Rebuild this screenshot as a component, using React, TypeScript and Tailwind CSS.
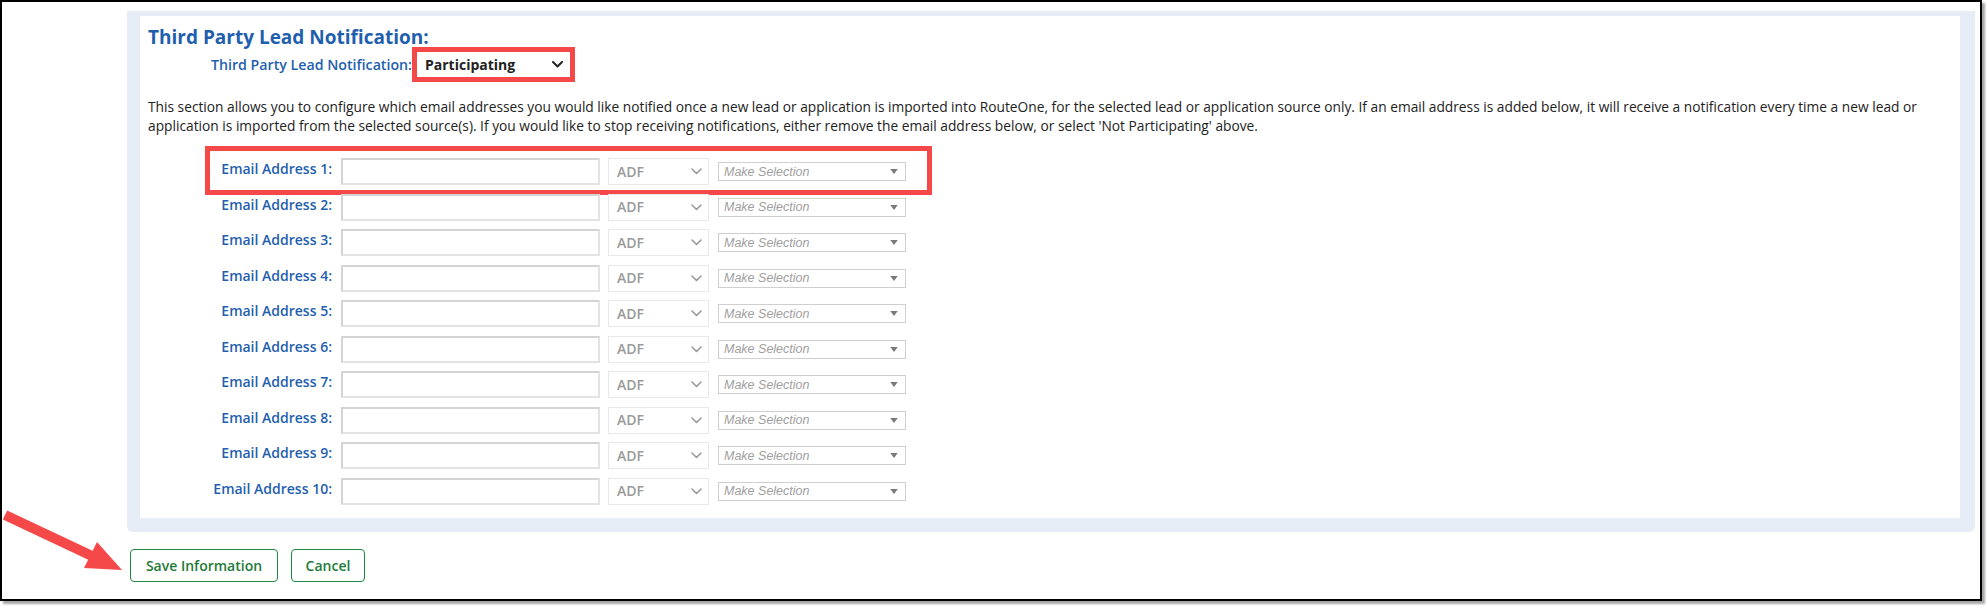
import React from "react";

const Chevron = ({ color, w = 11, h = 7, sw = 1.6 }: { color: string; w?: number; h?: number; sw?: number }) => (
  <svg width={w} height={h} viewBox="0 0 11 7" fill="none">
    <path d="M1 1 L5.5 5.5 L10 1" stroke={color} strokeWidth={sw} strokeLinecap="round" strokeLinejoin="round" />
  </svg>
);

const Triangle = () => (
  <svg width="8" height="5" viewBox="0 0 9 6">
    <path d="M0 0 H9 L4.5 6 Z" fill="#7a7a7a" />
  </svg>
);

function EmailRow({ n, highlight }: { n: number; highlight?: boolean }) {
  return (
    <div className="relative flex items-center h-[35.5px]">
      <div className="w-[127px] mb-[5px] text-right text-[14px] leading-[20px] font-semibold text-[#1f5fae] whitespace-nowrap">
        Email Address {n}:
      </div>
      <div className="ml-[9px] w-[259px] h-[27px] border-2 border-[#e3e3e3] border-t-[#d4d4d4] border-l-[#d4d4d4] bg-white" />
      <div className="ml-[8px] w-[101px] h-[27px] border border-[#e8e8e8] bg-white flex items-center justify-between pl-[8px] pr-[6px]">
        <span className="text-[14px] font-semibold text-[#9a9a9a] leading-none">ADF</span>
        <Chevron color="#9a9a9a" />
      </div>
      <div className="ml-[9px] w-[188px] h-[19px] border border-[#cfcfcf] bg-white flex items-center justify-between pl-[5px] pr-[7px]">
        <span className="font-['Liberation_Sans',Arial,sans-serif] italic text-[12.5px] text-[#a0a0a0] leading-none">Make Selection</span>
        <Triangle />
      </div>
      {highlight && (
        <div className="absolute left-0 -top-[8px] w-[727px] h-[49px] border-[5px] border-[#f54848] pointer-events-none" />
      )}
    </div>
  );
}

export default function App() {
  const rows = [1, 2, 3, 4, 5, 6, 7, 8, 9, 10];
  return (
    <div className="relative w-[1988px] h-[607px] bg-white font-['Open_Sans',sans-serif]">
      <div className="w-[1982px] h-[601px] border-2 border-black bg-white shadow-[3px_3px_2px_rgba(0,0,0,0.35)] pl-[125px] pt-[9px]">
        <div className="w-[1848px] bg-[#e7edf6] pt-[5px] pl-[13px] pr-[15px] pb-[14px] rounded-b-[6px]">
          <div className="bg-white px-[8px] pt-[11px] pb-[9px]">
            <h2 className="text-[19px] leading-[20px] font-bold text-[#1f5fae]">Third Party Lead Notification:</h2>
            <div className="flex items-center h-[35px]">
              <div className="w-[264px] text-right text-[14.2px] font-semibold text-[#1f5fae] whitespace-nowrap">
                Third Party Lead Notification:
              </div>
              <div className="w-[163px] h-[35px] border-[5px] border-[#f54848] bg-white flex items-center justify-between pl-[8px] pr-[7px]">
                <span className="text-[14px] font-bold text-[#222]">Participating</span>
                <Chevron color="#222" sw={2} />
              </div>
            </div>
            <p className="mt-[15px] text-[13.75px] leading-[19px] text-[#222]">
              This section allows you to configure which email addresses you would like notified once a new lead or application is imported into RouteOne, for the selected lead or application source only. If an email address is added below, it will receive a notification every time a new lead or application is imported from the selected source(s). If you would like to stop receiving notifications, either remove the email address below, or select 'Not Participating' above.
            </p>
            <div className="mt-[19px] ml-[57px]">
              {rows.map((n) => (
                <EmailRow key={n} n={n} highlight={n === 1} />
              ))}
            </div>
          </div>
        </div>
        <div className="mt-[17px] ml-[3px] flex gap-[13px]">
          <button className="w-[148px] h-[33px] rounded-[4px] border border-[#1f8a44] bg-white text-[14px] font-semibold text-[#1e7b37]">
            Save Information
          </button>
          <button className="w-[74px] h-[33px] rounded-[4px] border border-[#1f8a44] bg-white text-[14px] font-semibold text-[#1e7b37]">
            Cancel
          </button>
        </div>
      </div>
      <svg className="absolute left-0 top-[490px] pointer-events-none" width="140" height="95" viewBox="0 490 140 95">
        <line x1="5" y1="515" x2="92" y2="556" stroke="#f54848" strokeWidth="10" />
        <polygon points="122,570 84,568 97,542" fill="#f54848" />
      </svg>
    </div>
  );
}
